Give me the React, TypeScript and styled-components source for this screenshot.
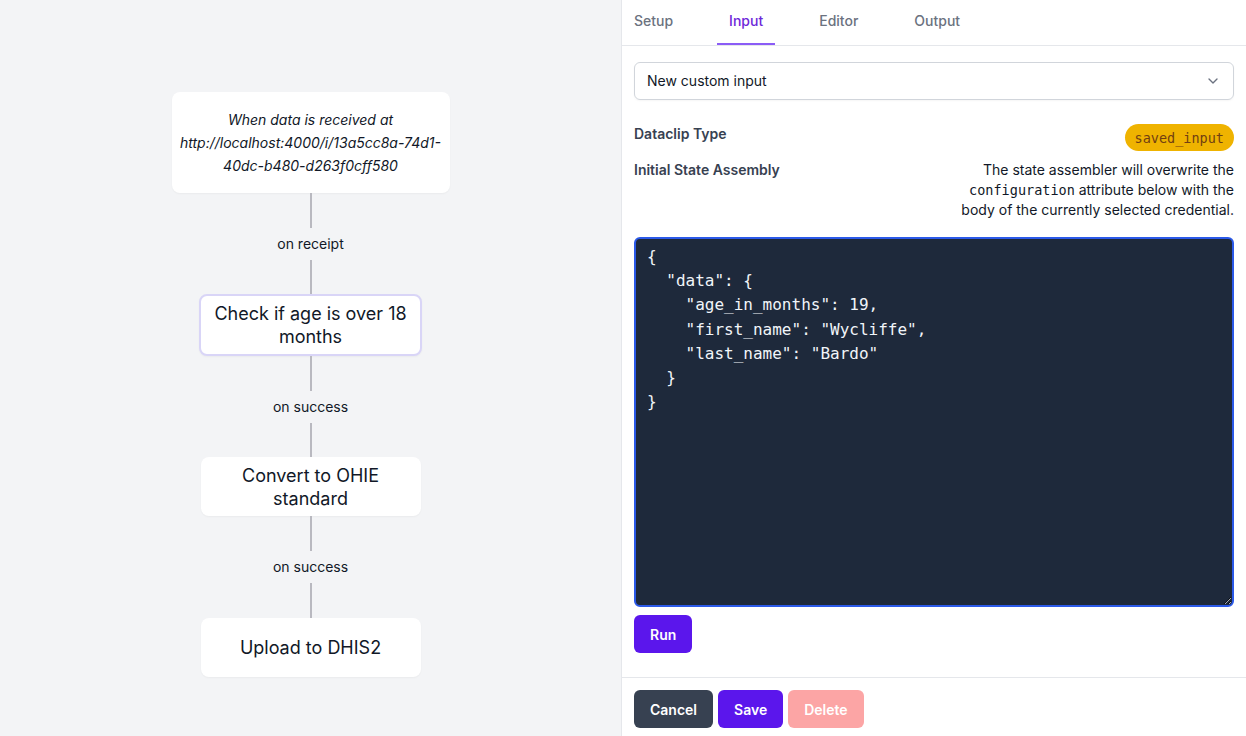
import React, { useEffect, useRef } from "react";
import styled, { createGlobalStyle } from "styled-components";
import { ChevronDown } from "lucide-react";

const GlobalStyle = createGlobalStyle`
  html, body, #root {
    margin: 0;
    height: 100%;
  }
  body {
    font-family: Inter, "Noto Sans", "Liberation Sans", sans-serif;
    color: #111827;
  }
  * {
    box-sizing: border-box;
  }
`;

const Layout = styled.div`
  display: flex;
  height: 100vh;
  overflow: hidden;
`;

const Canvas = styled.div`
  flex: 0 0 622px;
  background: #f3f4f6;
  border-right: 1px solid #e5e7eb;
  display: flex;
  flex-direction: column;
  align-items: center;
  padding-top: 92px;
`;

const TriggerNode = styled.div`
  width: 278px;
  padding: 16px 8px;
  background: #fff;
  border-radius: 8px;
  text-align: center;
  font-size: 14px;
  font-style: italic;
  line-height: 23px;
  color: #111827;
  box-shadow: 0 1px 2px rgba(0, 0, 0, 0.04);
`;

const JobNode = styled.div<{ $selected?: boolean }>`
  width: ${(p) => (p.$selected ? 223 : 220)}px;
  height: ${(p) => (p.$selected ? 62 : 59)}px;
  display: flex;
  align-items: center;
  justify-content: center;
  padding: 0 12px;
  background: #fff;
  border-radius: 8px;
  border: ${(p) => (p.$selected ? "2px solid #d9d5f7" : "none")};
  text-align: center;
  font-size: 18px;
  line-height: 23px;
  color: #111827;
  box-shadow: 0 1px 2px rgba(0, 0, 0, 0.04);
`;

const Edge = styled.div<{ $height: number }>`
  position: relative;
  height: ${(p) => p.$height}px;
  width: 120px;
  display: flex;
  align-items: center;
  justify-content: center;

  &::before {
    content: "";
    position: absolute;
    left: 50%;
    top: 0;
    bottom: 0;
    width: 2px;
    margin-left: -1px;
    background: #b9b9c0;
  }
`;

const EdgeLabel = styled.span`
  position: relative;
  background: #f3f4f6;
  padding: 7px 4px;
  font-size: 14px;
  line-height: 18px;
  color: #111827;
`;

const Panel = styled.div`
  flex: 1;
  background: #fff;
  display: flex;
  flex-direction: column;
`;

const Tabs = styled.div`
  display: flex;
  gap: 32px;
  height: 46px;
  border-bottom: 1px solid #e5e7eb;
`;

const Tab = styled.div<{ $active?: boolean }>`
  padding: 0 12px;
  height: 45px;
  display: flex;
  align-items: center;
  padding-bottom: 3px;
  font-size: 14px;
  font-weight: 500;
  color: ${(p) => (p.$active ? "#6d28d9" : "#6b7280")};
  border-bottom: 2px solid ${(p) => (p.$active ? "#8b5cf6" : "transparent")};
  margin-bottom: -1px;
`;

const Body = styled.div`
  padding: 16px 12px 24px;
  display: flex;
  flex-direction: column;
`;

const Select = styled.div`
  height: 38px;
  border: 1px solid #d1d5db;
  border-radius: 6px;
  display: flex;
  align-items: center;
  justify-content: space-between;
  padding: 0 12px 1px;
  font-size: 14px;
  color: #111827;
  box-shadow: 0 1px 2px rgba(0, 0, 0, 0.04);
`;

const InfoRow = styled.div<{ $top: number }>`
  display: flex;
  justify-content: space-between;
  align-items: flex-start;
  margin-top: ${(p) => p.$top}px;
`;

const Label = styled.div`
  font-size: 14px;
  line-height: 20px;
  font-weight: 600;
  color: #374151;
`;

const Badge = styled.span`
  height: 27px;
  display: inline-flex;
  align-items: center;
  padding: 0 10px;
  border-radius: 999px;
  background: #efb300;
  color: #713f12;
  font-family: "DejaVu Sans Mono", "Liberation Mono", monospace;
  font-size: 13.5px;
`;

const Description = styled.div`
  max-width: 282px;
  text-align: right;
  font-size: 14px;
  line-height: 20px;
  color: #111827;

  code {
    font-family: "DejaVu Sans Mono", "Liberation Mono", monospace;
    font-size: 13.5px;
    line-height: 20px;
  }
`;

const CodeArea = styled.textarea`
  margin-top: 17px;
  height: 370px;
  width: 100%;
  background: #1e293b;
  color: #f1f5f9;
  border: 2px solid #2b59e8;
  border-radius: 6px;
  padding: 6px 11px;
  font-family: "DejaVu Sans Mono", "Liberation Mono", monospace;
  font-size: 16px;
  line-height: 24.2px;
  outline: none;
  caret-color: #fff;
`;

const Button = styled.button<{ $tone: "primary" | "dark" | "danger" }>`
  height: 38px;
  padding: 0 16px;
  border: none;
  border-radius: 6px;
  font-family: inherit;
  font-size: 14px;
  font-weight: 600;
  color: #fff;
  background: ${(p) =>
    p.$tone === "primary" ? "#5b16ec" : p.$tone === "dark" ? "#374151" : "#fca5a5"};
`;

const RunRow = styled.div`
  margin-top: 8px;
  display: flex;
`;

const Footer = styled.div`
  border-top: 1px solid #e5e7eb;
  padding: 12px 12px 8px;
  display: flex;
  gap: 5px;
`;

const json = `{
  "data": {
    "age_in_months": 19,
    "first_name": "Wycliffe",
    "last_name": "Bardo"
  }
}`;

export default function App() {
  const ref = useRef<HTMLTextAreaElement>(null);

  useEffect(() => {
    const el = ref.current;
    if (el) {
      el.focus();
      el.setSelectionRange(json.length, json.length);
    }
  }, []);

  return (
    <Layout>
      <GlobalStyle />
      <Canvas>
        <TriggerNode>
          When data is received at http://localhost:4000/i/13a5cc8a-74d1-40dc-b480-d263f0cff580
        </TriggerNode>
        <Edge $height={101}>
          <EdgeLabel>on receipt</EdgeLabel>
        </Edge>
        <JobNode $selected>Check if age is over 18 months</JobNode>
        <Edge $height={101}>
          <EdgeLabel>on success</EdgeLabel>
        </Edge>
        <JobNode>Convert to OHIE standard</JobNode>
        <Edge $height={102}>
          <EdgeLabel>on success</EdgeLabel>
        </Edge>
        <JobNode>Upload to DHIS2</JobNode>
      </Canvas>

      <Panel>
        <Tabs>
          <Tab>Setup</Tab>
          <Tab $active>Input</Tab>
          <Tab>Editor</Tab>
          <Tab>Output</Tab>
        </Tabs>
        <Body>
          <Select>
            New custom input
            <ChevronDown size={16} color="#6b7280" />
          </Select>
          <InfoRow $top={24}>
            <Label>Dataclip Type</Label>
            <Badge>saved_input</Badge>
          </InfoRow>
          <InfoRow $top={9}>
            <Label>Initial State Assembly</Label>
            <Description>
              The state assembler will overwrite the <code>configuration</code> attribute
              below with the body of the currently selected credential.
            </Description>
          </InfoRow>
          <CodeArea ref={ref} defaultValue={json} spellCheck={false} />
          <RunRow>
            <Button $tone="primary">Run</Button>
          </RunRow>
        </Body>
        <Footer>
          <Button $tone="dark">Cancel</Button>
          <Button $tone="primary">Save</Button>
          <Button $tone="danger">Delete</Button>
        </Footer>
      </Panel>
    </Layout>
  );
}
